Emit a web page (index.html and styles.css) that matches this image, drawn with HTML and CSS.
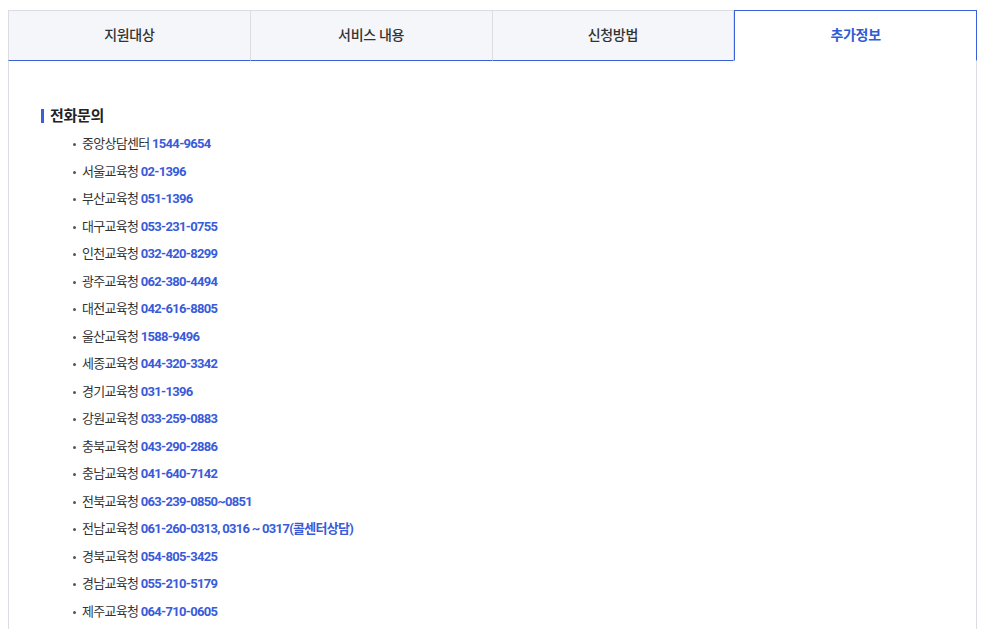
FILE: index.html
```html
<!DOCTYPE html>
<html lang="ko">
<head>
    <meta charset="UTF-8">
    <title>추가정보</title>
    <link rel="stylesheet" href="styles.css">
</head>
<body>
    <div class="wrap">
        <ul class="tabs">
            <li class="tab">지원대상</li>
            <li class="tab">서비스 내용</li>
            <li class="tab">신청방법</li>
            <li class="tab active">추가정보</li>
        </ul>
        <div class="tab-content">
            <h3 class="sub-title">전화문의</h3>
            <ul class="phone-list">
                <li>중앙상담센터 <b>1544-9654</b></li>
                <li>서울교육청 <b>02-1396</b></li>
                <li>부산교육청 <b>051-1396</b></li>
                <li>대구교육청 <b>053-231-0755</b></li>
                <li>인천교육청 <b>032-420-8299</b></li>
                <li>광주교육청 <b>062-380-4494</b></li>
                <li>대전교육청 <b>042-616-8805</b></li>
                <li>울산교육청 <b>1588-9496</b></li>
                <li>세종교육청 <b>044-320-3342</b></li>
                <li>경기교육청 <b>031-1396</b></li>
                <li>강원교육청 <b>033-259-0883</b></li>
                <li>충북교육청 <b>043-290-2886</b></li>
                <li>충남교육청 <b>041-640-7142</b></li>
                <li>전북교육청 <b>063-239-0850~0851</b></li>
                <li>전남교육청 <b>061-260-0313, 0316 ~ 0317(콜센터상담)</b></li>
                <li>경북교육청 <b>054-805-3425</b></li>
                <li>경남교육청 <b>055-210-5179</b></li>
                <li>제주교육청 <b>064-710-0605</b></li>
            </ul>
        </div>
    </div>
</body>
</html>
```

FILE: styles.css
```css
body {
    margin: 0;
    font-family: Roboto, "Noto Sans CJK KR", sans-serif;
    color: #333;
    background: #fff;
}

.wrap {
    width: 969px;
    padding: 10px 0 0 8px;
}

.tabs {
    display: flex;
    margin: 0;
    padding: 0;
    list-style: none;
}
.tab {
    flex: 1;
    height: 49px;
    line-height: 49px;
    text-align: center;
    font-size: 14px;
    font-weight: 500;
    letter-spacing: -0.3px;
    color: #333;
    background-color: #f5f6fa;
    border: 1px solid #dcdde2;
    border-bottom: 1px solid #3a5fd9;
    border-left: none;
}
.tab:first-child {
    border-left: 1px solid #dcdde2;
}
.tab.active {
    color: #2f5bd6;
    font-weight: 700;
    background-color: #fff;
    border: 1px solid #3a5fd9;
    border-bottom-color: #fff;
}

.tab-content {
    border-left: 1px solid #dcdde2;
    border-right: 1px solid #dcdde2;
    padding: 45px 32px 4px;
}

.sub-title {
    margin: 0 0 4px;
    padding-left: 9px;
    font-size: 15px;
    font-weight: 700;
    color: #222;
    line-height: 20px;
    letter-spacing: -0.3px;
    position: relative;
}
.sub-title::before {
    content: "";
    position: absolute;
    left: 0;
    top: 3px;
    width: 3px;
    height: 14px;
    background: #3a5fd9;
}

.phone-list {
    margin: 0;
    padding: 0 0 0 32px;
    list-style: none;
}
.phone-list li {
    position: relative;
    padding-left: 9px;
    font-size: 13px;
    line-height: 27.5px;
    letter-spacing: -0.7px;
    color: #333;
}
.phone-list li::before {
    content: "";
    position: absolute;
    left: 0;
    top: 13px;
    width: 3px;
    height: 3px;
    border-radius: 50%;
    background: #555;
}
.phone-list b {
    color: #3a5bd9;
    font-weight: 700;
}
```
